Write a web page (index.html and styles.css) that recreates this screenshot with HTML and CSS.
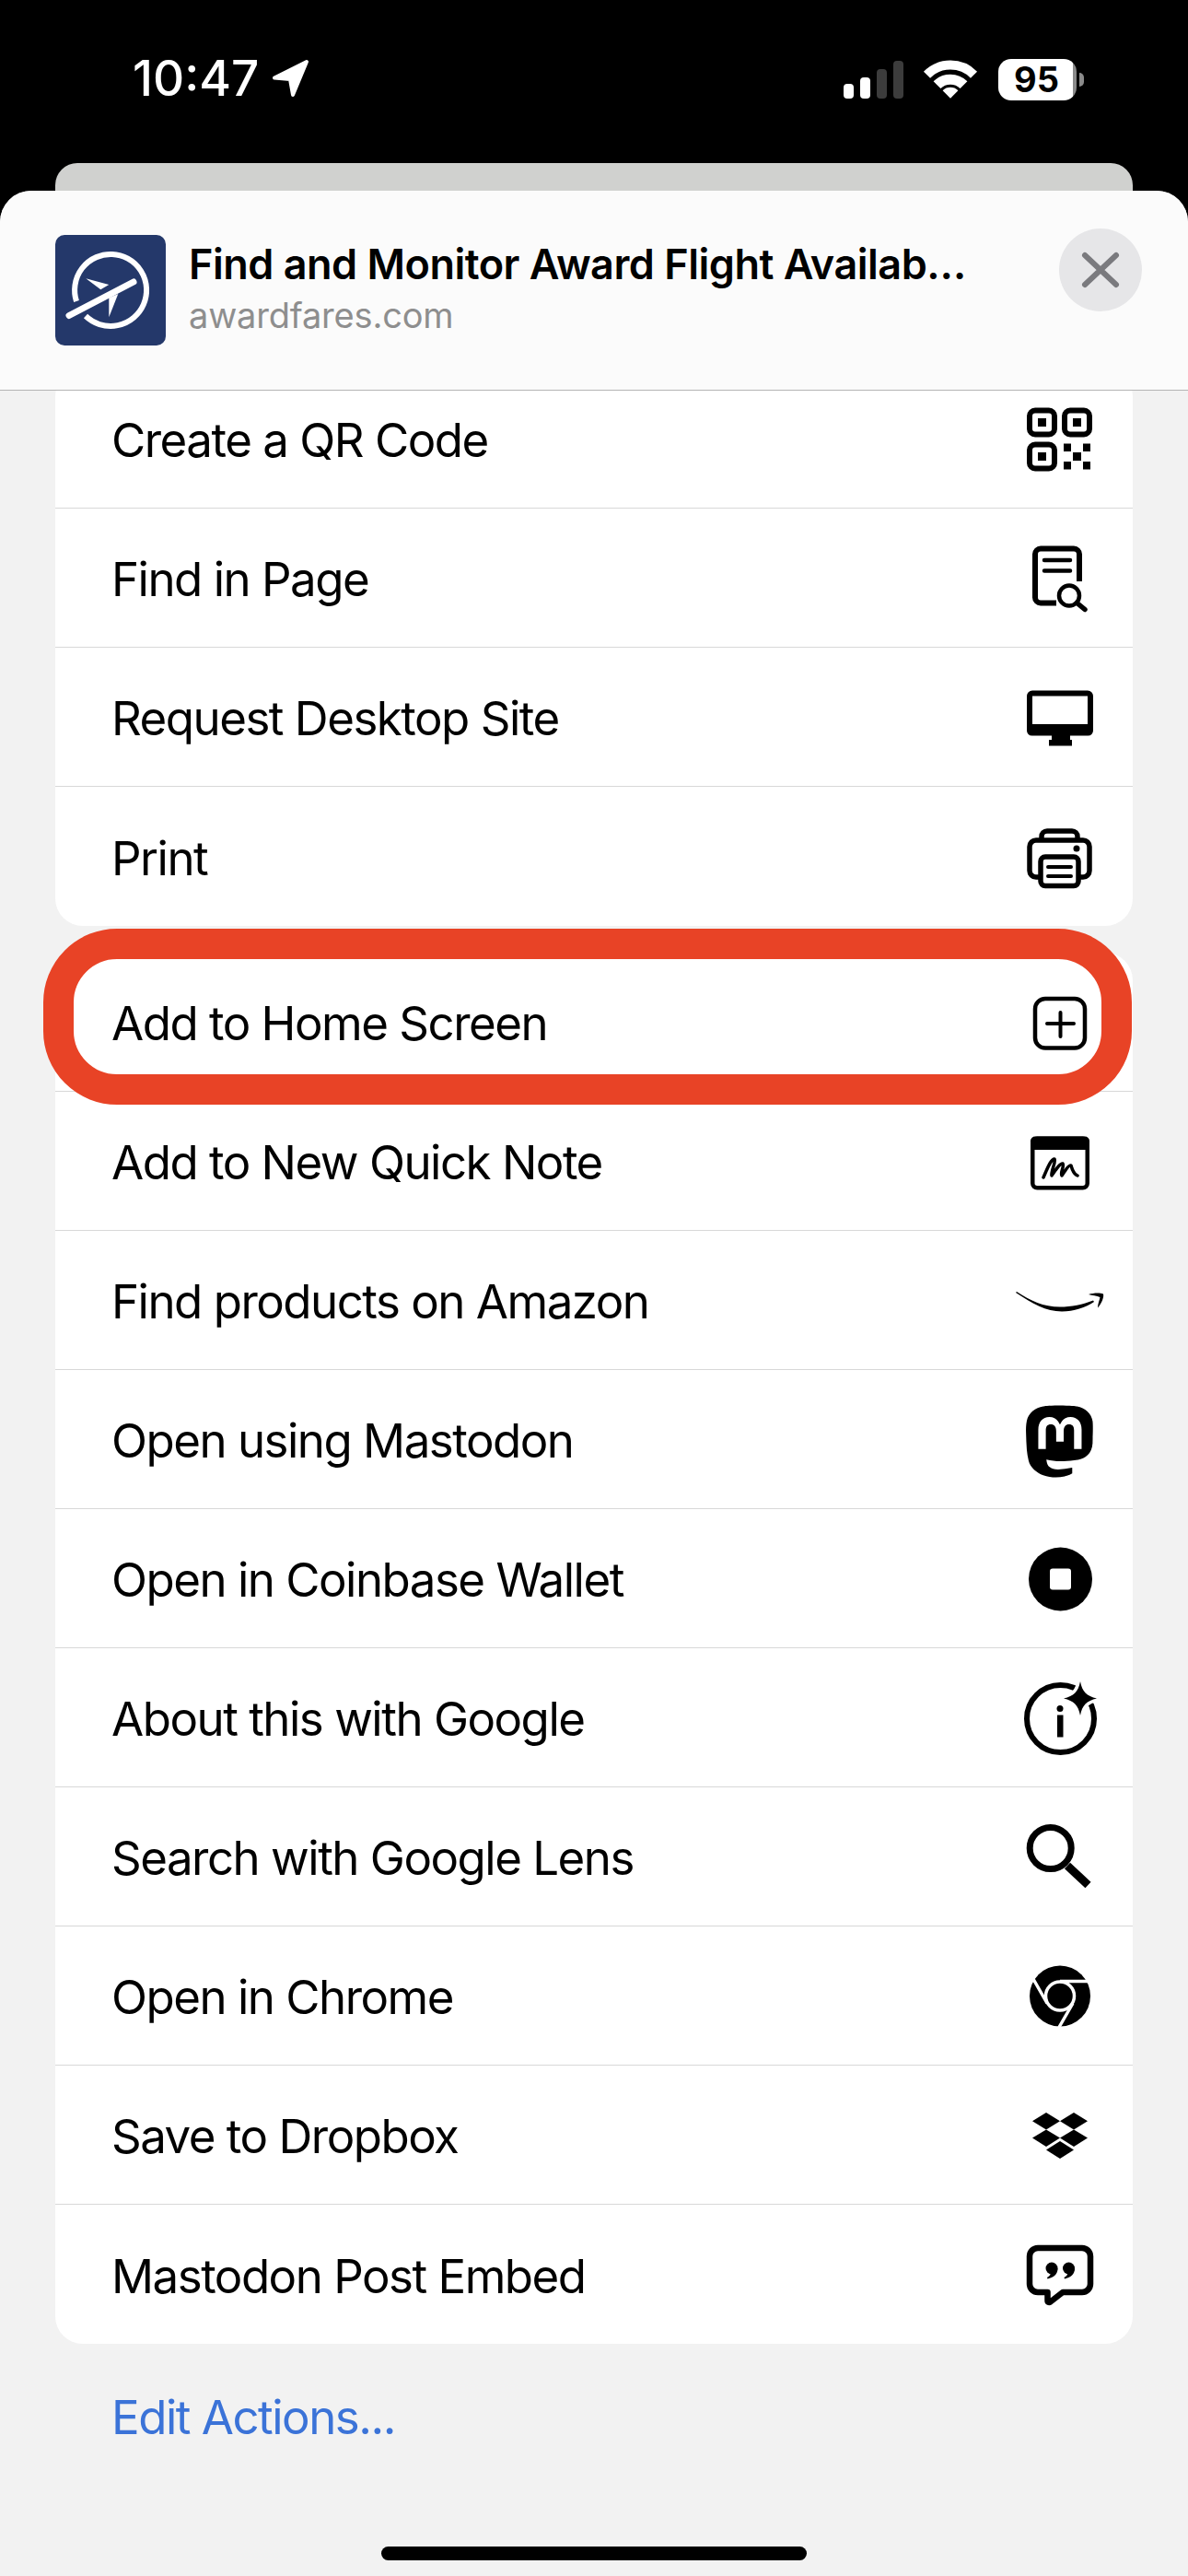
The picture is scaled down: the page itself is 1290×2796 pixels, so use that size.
FILE: index.html
```html
<!DOCTYPE html>
<html lang="en">
<head>
    <meta charset="UTF-8">
    <meta name="viewport" content="width=device-width, initial-scale=1.0">
    <title>Share Sheet</title>
    <link rel="stylesheet" href="styles.css">
</head>
<body>
    <div class="status-bar">
        <div class="status-left">
            <span class="time">10:47</span>
            <svg class="location" width="44" height="44" viewBox="0 0 44 44">
                <path d="M38 4L3 21.5L20 23L23 40Z" fill="#fff" stroke="#fff" stroke-width="4" stroke-linejoin="round"/>
            </svg>
        </div>
        <div class="status-right">
            <div class="signal">
                <span class="bar bar-1"></span>
                <span class="bar bar-2"></span>
                <span class="bar bar-3"></span>
                <span class="bar bar-4"></span>
            </div>
            <svg class="wifi" width="65" height="52" viewBox="0 0 65 52">
                <path d="M6.5 21.2A36 36 0 0 1 57.5 21.2" fill="none" stroke="#fff" stroke-width="10"/>
                <path d="M17.5 32.2A20.5 20.5 0 0 1 46.5 32.2" fill="none" stroke="#fff" stroke-width="11"/>
                <path d="M32 46.7L23.6 38.3A12 12 0 0 1 40.4 38.3Z" fill="#fff"/>
            </svg>
            <div class="battery">
                <span class="battery-body">95</span>
                <span class="battery-nub"></span>
            </div>
        </div>
    </div>

    <div class="back-card"></div>

    <div class="sheet">
        <header class="sheet-header">
            <svg class="site-icon" width="120" height="120" viewBox="0 0 120 120">
                <rect width="120" height="120" rx="10" fill="#24386a"/>
                <path d="M23 72A39 39 0 1 1 33 88" fill="none" stroke="#fff" stroke-width="6"/>
                <path d="M15 87.5L85 51" fill="none" stroke="#fff" stroke-width="7" stroke-linecap="round"/>
                <path d="M33.3 47.3L58.3 54L49.3 59.3Z" fill="#fff"/>
                <path d="M58.3 68.3L68.3 64L58.3 89.3Z" fill="#fff"/>
            </svg>
            <div class="site-text">
                <div class="site-title">Find and Monitor Award Flight Availab…</div>
                <div class="site-url">awardfares.com</div>
            </div>
            <div class="close-btn">
                <svg width="44" height="44" viewBox="0 0 44 44">
                    <path d="M5 6L39 38M39 6L5 38" fill="none" stroke="#7a7a7e" stroke-width="6" stroke-linecap="round"/>
                </svg>
            </div>
        </header>

        <div class="scroll-area">
            <div class="card card-first">
                <div class="row">
                    <span class="row-label">Create a QR Code</span>
                    <svg class="row-icon" width="120" height="120" viewBox="0 0 120 120">
                        <g fill="none" stroke="#000" stroke-width="6">
                            <rect x="27" y="29.5" width="27" height="26" rx="6"/>
                            <rect x="65" y="29.5" width="27" height="26" rx="6"/>
                            <rect x="27" y="66.5" width="27" height="26" rx="6"/>
                        </g>
                        <rect x="36" y="38" width="9" height="9"/>
                        <rect x="74" y="38" width="9" height="9"/>
                        <rect x="36" y="75" width="9" height="9"/>
                        <rect x="64" y="65.5" width="8" height="8.5"/>
                        <rect x="85" y="65.5" width="8" height="8.5"/>
                        <rect x="74" y="75" width="9" height="9"/>
                        <rect x="64" y="85" width="8" height="8.5"/>
                        <rect x="85" y="85" width="8" height="8.5"/>
                    </svg>
                </div>
                <div class="row">
                    <span class="row-label">Find in Page</span>
                    <svg class="row-icon" width="120" height="120" viewBox="0 0 120 120">
                        <path d="M56 87.5H39a6 6 0 0 1-6-6V34.5a6 6 0 0 1 6-6H75a6 6 0 0 1 6 6V64" fill="none" stroke="#000" stroke-width="6"/>
                        <path d="M43 41H71M43 52.5H71" fill="none" stroke="#000" stroke-width="4.5" stroke-linecap="round"/>
                        <circle cx="70" cy="79.5" r="14" fill="#fff"/>
                        <circle cx="70" cy="79.5" r="11" fill="none" stroke="#000" stroke-width="4.5"/>
                        <path d="M78.5 87.5L87 94.5" fill="none" stroke="#000" stroke-width="5.5" stroke-linecap="round"/>
                    </svg>
                </div>
                <div class="row">
                    <span class="row-label">Request Desktop Site</span>
                    <svg class="row-icon" width="120" height="120" viewBox="0 0 120 120">
                        <path d="M30 31.5H90a6 6 0 0 1 6 6V75a5.5 5.5 0 0 1-5.5 5.5H29.5A5.500 5.500 0 0 1 24 75V37.500a6 6 0 0 1 6-6ZM30 37.500V68H90V37.500Z" fill-rule="evenodd"/>
                        <path d="M51 80H71V85H73V91.500H48V85H51Z"/>
                    </svg>
                </div>
                <div class="row">
                    <span class="row-label">Print</span>
                    <svg class="row-icon" width="120" height="120" viewBox="0 0 120 120">
                        <g fill="none" stroke="#000" stroke-width="5.5">
                            <path d="M40 40V38a6 6 0 0 1 6-6H73a6 6 0 0 1 6 6V40"/>
                            <path d="M37 82H34a7 7 0 0 1-7-7V49a7 7 0 0 1 7-7H85a7 7 0 0 1 7 7V75a7 7 0 0 1-7 7H82"/>
                            <rect x="39" y="60" width="41" height="31.500" rx="5" fill="#fff"/>
                        </g>
                        <path d="M47 71H72M47 81H72" fill="none" stroke="#000" stroke-width="4" stroke-linecap="round"/>
                        <circle cx="78" cy="51" r="3.500"/>
                    </svg>
                </div>
            </div>

            <div class="card">
                <div class="row">
                    <span class="row-label">Add to Home Screen</span>
                    <svg class="row-icon" width="120" height="120" viewBox="0 0 120 120">
                        <rect x="33" y="35" width="54" height="53.500" rx="11" fill="none" stroke="#000" stroke-width="4.500"/>
                        <path d="M46 62H75M60.500 50V76" fill="none" stroke="#000" stroke-width="4" stroke-linecap="round"/>
                    </svg>
                    <div class="highlight-ring"></div>
                </div>
                <div class="row">
                    <span class="row-label">Add to New Quick Note</span>
                    <svg class="row-icon" width="120" height="120" viewBox="0 0 120 120">
                        <rect x="30.250" y="35.750" width="59.500" height="53.500" rx="5" fill="none" stroke="#000" stroke-width="4.500"/>
                        <path d="M33 33.500H87a5 5 0 0 1 5 5V48H28V38.500a5 5 0 0 1 5-5Z"/>
                        <path d="M42 78C46 69 50 58 54 58C56 61 50 71 51 76C54 72 60 62 63 63C65 66 60 72 62 76C66 70 70 64 72 65C73 68 74 74 79 76" fill="none" stroke="#000" stroke-width="3.500" stroke-linecap="round" stroke-linejoin="round"/>
                    </svg>
                </div>
                <div class="row">
                    <span class="row-label">Find products on Amazon</span>
                    <svg class="row-icon" width="120" height="120" viewBox="0 0 120 120">
                        <path d="M12 52C30 64 45 72.500 62 72.500C75 72.500 88 68 97 62L96 60.500C85 65 72 67.500 60 67.500C42 67.500 28 61 13 51Z"/>
                        <path d="M91 54C96 52.500 103 52 107 53.500C108 57 105 64 101 68.500C101 64 103 60 103.500 57C100 55.500 95 55 91 54Z"/>
                    </svg>
                </div>
                <div class="row">
                    <span class="row-label">Open using Mastodon</span>
                    <svg class="row-icon" width="120" height="120" viewBox="0 0 120 120">
                        <g transform="translate(21 23.500) scale(3.200 3.250)">
                            <path d="M23.268 5.313c-.35-2.578-2.617-4.61-5.304-5.004C17.51.242 15.792 0 11.813 0h-.03c-3.98 0-4.835.242-5.288.309C3.882.692 1.496 2.518.917 5.127.64 6.412.61 7.837.661 9.143c.074 1.874.088 3.745.26 5.611.118 1.24.325 2.47.62 3.68.55 2.237 2.777 4.098 4.96 4.857 2.336.792 4.849.923 7.256.38.265-.061.527-.132.786-.213.585-.184 1.27-.39 1.774-.753a.057.057 0 0 0 .023-.043v-1.809a.052.052 0 0 0-.02-.041.053.053 0 0 0-.046-.01 20.282 20.282 0 0 1-4.709.545c-2.73 0-3.463-1.284-3.674-1.818a5.593 5.593 0 0 1-.319-1.433.053.053 0 0 1 .066-.054c1.517.363 3.072.546 4.632.546.376 0 .75 0 1.125-.01 1.57-.044 3.224-.124 4.768-.422.038-.008.077-.015.11-.024 2.435-.464 4.753-1.92 4.989-5.604.008-.145.03-1.52.03-1.67.002-.512.167-3.63-.024-5.545zm-3.748 9.195h-2.561V8.29c0-1.309-.55-1.976-1.67-1.976-1.23 0-1.846.79-1.846 2.35v3.403h-2.546V8.663c0-1.56-.617-2.35-1.848-2.35-1.112 0-1.668.668-1.67 1.977v6.218H4.822V8.102c0-1.31.337-2.35 1.011-3.12.696-.77 1.608-1.164 2.74-1.164 1.311 0 2.302.5 2.962 1.498l.638 1.06.638-1.06c.66-.999 1.65-1.498 2.96-1.498 1.13 0 2.043.395 2.74 1.164.675.77 1.012 1.81 1.012 3.12z"/>
                        </g>
                    </svg>
                </div>
                <div class="row">
                    <span class="row-label">Open in Coinbase Wallet</span>
                    <svg class="row-icon" width="120" height="120" viewBox="0 0 120 120">
                        <circle cx="60.500" cy="61" r="34.500"/>
                        <rect x="49" y="49.500" width="23" height="23" rx="3" fill="#fff"/>
                    </svg>
                </div>
                <div class="row">
                    <span class="row-label">About this with Google</span>
                    <svg class="row-icon" width="120" height="120" viewBox="0 0 120 120">
                        <circle cx="60.500" cy="61.500" r="36.500" fill="none" stroke="#000" stroke-width="6"/>
                        <path d="M82 21C84 32 89 37 100 39.500C89 42 84 47 82 58C80 47 75 42 64 39.500C75 37 80 32 82 21Z" stroke="#fff" stroke-width="7" paint-order="stroke"/>
                        <circle cx="60" cy="50.500" r="3.500"/>
                        <rect x="57" y="57.500" width="6.500" height="24"/>
                    </svg>
                </div>
                <div class="row">
                    <span class="row-label">Search with Google Lens</span>
                    <svg class="row-icon" width="120" height="120" viewBox="0 0 120 120">
                        <circle cx="49.700" cy="51" r="22.500" fill="none" stroke="#000" stroke-width="7"/>
                        <path d="M68 70L90.500 91" fill="none" stroke="#000" stroke-width="9"/>
                    </svg>
                </div>
                <div class="row">
                    <span class="row-label">Open in Chrome</span>
                    <svg class="row-icon" width="120" height="120" viewBox="0 0 120 120">
                        <circle cx="60" cy="60.500" r="33"/>
                        <circle cx="60" cy="60.500" r="15.500" fill="none" stroke="#fff" stroke-width="3.500"/>
                        <path d="M60 44.500H94M73.900 68.500L58.900 94.500M46.100 68.500L31 42" fill="none" stroke="#fff" stroke-width="3.500"/>
                    </svg>
                </div>
                <div class="row">
                    <span class="row-label">Save to Dropbox</span>
                    <svg class="row-icon" width="120" height="120" viewBox="0 0 120 120">
                        <path d="M45 36L60 45.200L45 54.500L30 45.200Z"/>
                        <path d="M75 36L90 45.200L75 54.500L60 45.200Z"/>
                        <path d="M45 54.500L60 63.500L45 73L30 63.500Z"/>
                        <path d="M75 54.500L90 63.500L75 73L60 63.500Z"/>
                        <path d="M60 67L75 76.500L60 86L45 76.500Z"/>
                    </svg>
                </div>
                <div class="row row-last">
                    <span class="row-label">Mastodon Post Embed</span>
                    <svg class="row-icon" width="120" height="120" viewBox="0 0 120 120">
                        <path d="M36 31H84a9 9 0 0 1 9 9V70a9 9 0 0 1-9 9H63L49.500 89.500C48 90.500 46.500 90 46.500 88V79H36a9 9 0 0 1-9-9V40a9 9 0 0 1 9-9Z" fill="none" stroke="#000" stroke-width="6.500" stroke-linejoin="round"/>
                        <circle cx="51" cy="53" r="6.500"/>
                        <circle cx="69.500" cy="53" r="6.500"/>
                        <path d="M57.500 53C57.500 60 53 63 46.500 64.500L46 63C49 61.500 50 59.500 50 57Z"/>
                        <path d="M76 53C76 60 71.500 63 65 64.500L64.500 63C67.500 61.500 68.500 59.500 68.500 57Z"/>
                    </svg>
                </div>
            </div>

            <a class="edit-actions" href="#">Edit Actions...</a>
        </div>

        <div class="home-indicator"></div>
    </div>
</body>
</html>
```

FILE: styles.css
```css
html, body {
    margin: 0;
    padding: 0;
}

body {
    width: 1290px;
    height: 2796px;
    background-color: #000;
    font-family: Inter, 'Liberation Sans', sans-serif;
    overflow: hidden;
}

.status-bar {
    height: 177px;
    box-sizing: border-box;
    padding: 58px 113px 0 144px;
    display: flex;
    justify-content: space-between;
    align-items: flex-start;
}

.status-left {
    display: flex;
    align-items: center;
    gap: 14px;
}

.time {
    color: #fff;
    font-size: 53px;
    line-height: 54px;
    font-weight: 500;
}

.status-right {
    display: flex;
    align-items: flex-start;
    gap: 19px;
    padding-top: 2px;
}

.signal {
    display: flex;
    align-items: flex-end;
    gap: 7px;
    height: 47px;
}

.bar {
    width: 11px;
    border-radius: 4px;
    background-color: #fff;
}

.bar-1 { height: 16px; }
.bar-2 { height: 23px; }
.bar-3 { height: 32px; background-color: #3c3c3c; }
.bar-4 { height: 41px; background-color: #3c3c3c; }

.battery {
    display: flex;
    align-items: center;
    gap: 3px;
    margin-top: 4px;
}

.battery-body {
    width: 85px;
    height: 45px;
    box-sizing: border-box;
    padding-right: 2px;
    border-radius: 14px;
    background: linear-gradient(to right, #fff 95%, #8a8a8a 95%);
    color: #000;
    font-size: 38px;
    font-weight: 700;
    line-height: 45px;
    text-align: center;
}

.battery-nub {
    width: 5px;
    height: 15px;
    border-radius: 0 8px 8px 0;
    background-color: #8a8a8a;
}

.back-card {
    height: 30px;
    margin: 0 60px;
    border-radius: 24px 24px 0 0;
    background-color: #d0d1cf;
}

.sheet {
    height: 2589px;
    border-radius: 34px 34px 0 0;
    background-color: #f2f2f2;
    overflow: hidden;
}

.sheet-header {
    height: 217px;
    box-sizing: border-box;
    padding: 48px 50px 0 60px;
    display: flex;
    align-items: flex-start;
    gap: 25px;
    background-color: #fbfbfb;
    border-bottom: 1.5px solid #b4b4b4;
    position: relative;
    z-index: 2;
}

.site-icon {
    flex-shrink: 0;
}

.site-text {
    flex: 1;
    min-width: 0;
    padding-top: 6px;
}

.site-title {
    font-size: 45px;
    line-height: 52px;
    font-weight: 600;
    letter-spacing: -0.5px;
    color: #000;
    white-space: nowrap;
}

.site-url {
    margin-top: 6px;
    font-size: 38px;
    line-height: 46px;
    letter-spacing: -0.2px;
    color: #8e8e8e;
}

.close-btn {
    width: 90px;
    height: 90px;
    flex-shrink: 0;
    margin-top: -7px;
    border-radius: 50%;
    background-color: #e6e6e8;
    display: flex;
    align-items: center;
    justify-content: center;
}

.scroll-area {
    height: 2316px;
    overflow: hidden;
}

.card {
    margin: 29px 60px 0;
    border-radius: 30px;
    background-color: #fff;
}

.card-first {
    margin-top: -23px;
}

.row {
    height: 151px;
    box-sizing: border-box;
    padding: 0 19px 0 61px;
    display: flex;
    align-items: center;
    justify-content: space-between;
    border-bottom: 1.5px solid #d8d8d8;
    position: relative;
}

.card-first .row:last-child,
.row-last {
    border-bottom: none;
}

.row-label {
    padding-top: 3px;
    font-size: 51px;
    letter-spacing: -1.5px;
    color: #000;
    white-space: nowrap;
}

.row-icon {
    flex-shrink: 0;
}

.highlight-ring {
    position: absolute;
    top: -26px;
    left: -13px;
    width: 1182px;
    height: 191px;
    box-sizing: border-box;
    border: 33px solid #e84326;
    border-radius: 80px;
}

.edit-actions {
    display: block;
    margin: 49px 0 0 121px;
    font-size: 51px;
    line-height: 62px;
    letter-spacing: -1.5px;
    color: #3b73d8;
    text-decoration: none;
}

.home-indicator {
    width: 462px;
    height: 15px;
    margin: 24px auto 0;
    border-radius: 8px;
    background-color: #000;
}
```
